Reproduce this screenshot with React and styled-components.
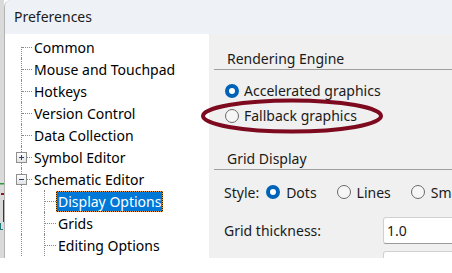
import React from "react";
import styled, { createGlobalStyle } from "styled-components";

const GlobalStyle = createGlobalStyle`
  html, body { margin: 0; padding: 0; background: #ffffff; overflow: hidden; }
  body { font-family: "Noto Sans", "Open Sans", sans-serif; }
`;

const Screen = styled.div`
  display: flex;
  height: 258px;
  overflow: hidden;
  background: #ffffff;
`;

const BackStrip = styled.div`
  width: 4px;
  flex: none;
  background: #dadada;
  display: flex;
`;

const Window = styled.div`
  flex: 1;
  min-width: 0;
  display: flex;
  flex-direction: column;
  border-left: 1px solid #b3b3b3;
  border-top-left-radius: 7px;
  overflow: hidden;
  background: #f0f0f0;
`;

const TitleBar = styled.div`
  height: 34px;
  flex: none;
  line-height: 34px;
  padding-left: 9px;
  background: #eef1f6;
  color: #1b1b1b;
  font-size: 14px;
`;

const Body = styled.div`
  flex: 1;
  display: flex;
  min-height: 0;
`;

const TreePanel = styled.div`
  width: 204px;
  flex: none;
  background: #ffffff;
  padding: 2px 0 0 4px;
  box-sizing: border-box;
`;

const Row = styled.div`
  display: flex;
  height: 22px;
  align-items: center;
  font-size: 14px;
  color: #000000;
`;

const Guide = styled.span`
  position: relative;
  align-self: stretch;
  flex: none;
  width: ${(p) => p.$w}px;

  &::before {
    content: "";
    position: absolute;
    left: 12px;
    top: ${(p) => (p.$startMid ? "11px" : "0")};
    bottom: 0;
    border-left: 1px dotted #8a8a8a;
  }

  &::after {
    content: "";
    display: ${(p) => (p.$branch ? "block" : "none")};
    position: absolute;
    left: 13px;
    right: 0;
    top: 11px;
    border-top: 1px dotted #8a8a8a;
  }
`;

const Expander = styled.svg`
  position: absolute;
  left: 7px;
  top: 6px;
  z-index: 1;
`;

const Label = styled.span`
  display: inline-block;
  height: 21px;
  line-height: 19px;
  box-sizing: border-box;
  padding: 0 1px;
  white-space: nowrap;
  border: 1px ${(p) => (p.$selected ? "dotted #f2a33a" : "solid transparent")};
  color: ${(p) => (p.$selected ? "#ffffff" : "#000000")};
  background: ${(p) =>
    p.$selected
      ? "linear-gradient(#0078d7, #0078d7) padding-box, #2a1a00 border-box"
      : "transparent"};
`;

const Settings = styled.div`
  flex: 1;
  min-width: 0;
  position: relative;
  background: #f0f0f0;
  padding: 14px 0 0 5px;
  font-size: 14px;
  color: #1a1a1a;
`;

const GroupHeading = styled.div`
  height: 21px;
  line-height: 21px;
  padding-left: 13px;
  border-bottom: 1px solid #a0a0a0;
  margin-top: ${(p) => p.$gap || 0}px;
  white-space: nowrap;
`;

const RadioList = styled.div`
  margin-top: 8px;
  padding-left: 11px;
`;

const RadioRow = styled.div`
  height: 25px;
  display: flex;
  align-items: center;
  gap: 5px;
  white-space: nowrap;
`;

const RadioDot = styled.span`
  width: 14px;
  height: 14px;
  flex: none;
  box-sizing: border-box;
  border-radius: 50%;
  border: ${(p) => (p.$on ? "4px solid #0063b8" : "1px solid #6b6b6b")};
  background: ${(p) => (p.$on ? "#ffffff" : "#f6f6f6")};
`;

const InlineRow = styled.div`
  margin-top: 10px;
  height: 24px;
  padding-left: 10px;
  display: flex;
  align-items: center;
  white-space: nowrap;
`;

const InlineLabel = styled.span`
  margin-right: 7px;
`;

const Option = styled.span`
  display: flex;
  align-items: center;
  gap: 6px;
  margin-right: 20px;
`;

const Fields = styled.div`
  margin-top: 13px;
  display: flex;
  flex-direction: column;
  gap: 7px;
`;

const FieldRow = styled.div`
  display: flex;
  align-items: center;
  height: 27px;
  padding-left: 10px;
  white-space: nowrap;
`;

const FieldLabel = styled.span`
  width: 159px;
  flex: none;
`;

const Input = styled.div`
  width: 140px;
  flex: none;
  height: 27px;
  box-sizing: border-box;
  background: #ffffff;
  border: 1px solid #d0d0d0;
  border-bottom-color: #9a9a9a;
  border-radius: 3px 0 0 3px;
  padding-left: 3px;
  line-height: 25px;
  color: #1a1a1a;
`;

const Highlight = styled.svg`
  position: absolute;
  left: -9px;
  top: 62px;
  pointer-events: none;
`;

const treeItems = [
  { label: "Common", startMid: true },
  { label: "Mouse and Touchpad" },
  { label: "Hotkeys" },
  { label: "Version Control" },
  { label: "Data Collection" },
  { label: "Symbol Editor", box: "plus" },
  { label: "Schematic Editor", box: "minus" },
  { label: "Display Options", child: true, selected: true },
  { label: "Grids", child: true },
  { label: "Editing Options", child: true },
];

function ExpanderBox({ kind }) {
  return (
    <Expander width="11" height="11" viewBox="0 0 11 11">
      <defs>
        <linearGradient id={`g-${kind}`} x1="0" y1="0" x2="0" y2="1">
          <stop offset="0" stopColor="#ffffff" />
          <stop offset="1" stopColor="#e2e2e2" />
        </linearGradient>
      </defs>
      <rect x="0.5" y="0.5" width="10" height="10" fill={`url(#g-${kind})`} stroke="#8f8f8f" />
      <path d="M3 5.5H8" stroke="#27446e" strokeWidth="1" />
      {kind === "plus" && <path d="M5.5 3V8" stroke="#27446e" strokeWidth="1" />}
    </Expander>
  );
}

function TreeRow({ item }) {
  return (
    <Row>
      {item.child ? (
        <>
          <Guide $w={23} />
          <Guide $w={24} $branch />
        </>
      ) : (
        <Guide $w={23} $branch $startMid={item.startMid}>
          {item.box && <ExpanderBox kind={item.box} />}
        </Guide>
      )}
      <Label $selected={item.selected}>{item.label}</Label>
    </Row>
  );
}

function Radio({ on, children }) {
  return (
    <RadioRow>
      <RadioDot $on={on} />
      <span>{children}</span>
    </RadioRow>
  );
}

export default function App() {
  return (
    <>
      <GlobalStyle />
      <Screen>
        <BackStrip>
          <svg width="4" height="258" viewBox="0 0 4 258">
            <rect x="0" y="183" width="4" height="1.5" fill="#2b9a3c" />
            <rect x="1" y="193" width="3" height="2" fill="#8b1c1c" />
            <rect x="3" y="200" width="1" height="22" fill="#7a1a1a" />
            <rect x="0" y="223" width="1" height="7" fill="#1f7a7a" />
            <rect x="0" y="229" width="3" height="1" fill="#1f7a7a" />
          </svg>
        </BackStrip>
        <Window>
          <TitleBar>Preferences</TitleBar>
          <Body>
            <TreePanel>
              {treeItems.map((item) => (
                <TreeRow key={item.label} item={item} />
              ))}
            </TreePanel>
            <Settings>
              <GroupHeading>Rendering Engine</GroupHeading>
              <RadioList>
                <Radio on>Accelerated graphics</Radio>
                <Radio>Fallback graphics</Radio>
              </RadioList>
              <GroupHeading $gap={20}>Grid Display</GroupHeading>
              <InlineRow>
                <InlineLabel>Style:</InlineLabel>
                <Option>
                  <RadioDot $on />
                  <span>Dots</span>
                </Option>
                <Option>
                  <RadioDot />
                  <span>Lines</span>
                </Option>
                <Option>
                  <RadioDot />
                  <span>Small crosses</span>
                </Option>
              </InlineRow>
              <Fields>
                <FieldRow>
                  <FieldLabel>Grid thickness:</FieldLabel>
                  <Input>1.0</Input>
                </FieldRow>
                <FieldRow>
                  <FieldLabel>Minimum grid spacing:</FieldLabel>
                  <Input>10</Input>
                </FieldRow>
              </Fields>
              <Highlight width="190" height="42" viewBox="0 0 190 42">
                <ellipse cx="92" cy="20" rx="89" ry="15.5" fill="none" stroke="#7d0a1e" strokeWidth="4" />
              </Highlight>
            </Settings>
          </Body>
        </Window>
      </Screen>
    </>
  );
}
